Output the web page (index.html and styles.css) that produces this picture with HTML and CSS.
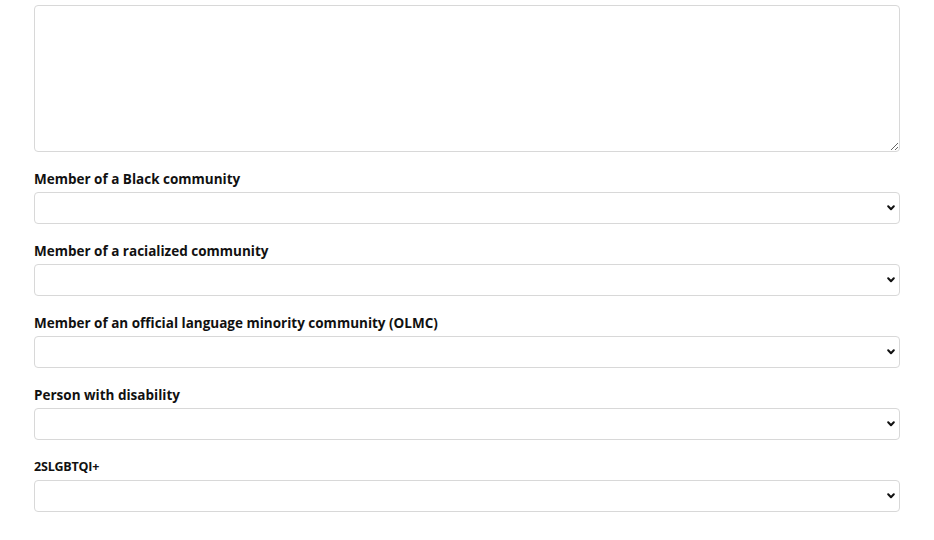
FILE: index.html
```html
<!DOCTYPE html>
<html lang="en">
<head>
<meta charset="utf-8">
<link rel="stylesheet" href="styles.css">
</head>
<body>
<form class="form">
  <textarea class="area"></textarea>
  <div class="group">
    <label class="label">Member of a Black community</label>
    <div class="select-wrap">
      <select class="select"><option></option></select>
      <svg class="chev" viewBox="0 0 8 6" width="8" height="6"><path d="M1.2 1.3 L4 4.2 L6.8 1.3" fill="none" stroke="#111" stroke-width="2" stroke-linecap="round" stroke-linejoin="round"/></svg>
    </div>
  </div>
  <div class="group">
    <label class="label">Member of a racialized community</label>
    <div class="select-wrap">
      <select class="select"><option></option></select>
      <svg class="chev" viewBox="0 0 8 6" width="8" height="6"><path d="M1.2 1.3 L4 4.2 L6.8 1.3" fill="none" stroke="#111" stroke-width="2" stroke-linecap="round" stroke-linejoin="round"/></svg>
    </div>
  </div>
  <div class="group">
    <label class="label">Member of an official language minority community (OLMC)</label>
    <div class="select-wrap">
      <select class="select"><option></option></select>
      <svg class="chev" viewBox="0 0 8 6" width="8" height="6"><path d="M1.2 1.3 L4 4.2 L6.8 1.3" fill="none" stroke="#111" stroke-width="2" stroke-linecap="round" stroke-linejoin="round"/></svg>
    </div>
  </div>
  <div class="group">
    <label class="label">Person with disability</label>
    <div class="select-wrap">
      <select class="select"><option></option></select>
      <svg class="chev" viewBox="0 0 8 6" width="8" height="6"><path d="M1.2 1.3 L4 4.2 L6.8 1.3" fill="none" stroke="#111" stroke-width="2" stroke-linecap="round" stroke-linejoin="round"/></svg>
    </div>
  </div>
  <div class="group">
    <label class="label label-alt">2SLGBTQI+</label>
    <div class="select-wrap">
      <select class="select"><option></option></select>
      <svg class="chev" viewBox="0 0 8 6" width="8" height="6"><path d="M1.2 1.3 L4 4.2 L6.8 1.3" fill="none" stroke="#111" stroke-width="2" stroke-linecap="round" stroke-linejoin="round"/></svg>
    </div>
  </div>
</form>
</body>
</html>
```
FILE: styles.css
```css
html, body {
  margin: 0;
  padding: 0;
  background: #fff;
}
body {
  font-family: "Open Sans", "Liberation Sans", sans-serif;
  color: #111;
}
.form {
  display: flex;
  flex-direction: column;
  padding: 5px 34px 0 34px;
  width: 866px;
}
.area {
  display: block;
  box-sizing: border-box;
  width: 866px;
  height: 147px;
  border: 1px solid #d8d8d8;
  border-radius: 4px;
  resize: vertical;
  margin: 0;
  padding: 6px;
  font-family: inherit;
  outline: none;
}
.group {
  display: flex;
  flex-direction: column;
  gap: 4px;
  margin-top: 16px;
}
.label {
  display: block;
  font-size: 13.5px;
  line-height: 18px;
  padding-top: 2px;
  font-weight: 700;
  color: #111;
  height: 18px;
}
.label-alt {
  font-size: 12.5px;
  letter-spacing: -0.2px;
}
.select-wrap {
  position: relative;
  height: 32px;
}
.select {
  -webkit-appearance: none;
  appearance: none;
  box-sizing: border-box;
  width: 866px;
  height: 32px;
  margin: 0;
  border: 1px solid #d8d8d8;
  border-radius: 4px;
  background: #fff;
  font-family: inherit;
  font-size: 13px;
}
.chev {
  position: absolute;
  right: 5px;
  top: 13px;
  pointer-events: none;
}
```
